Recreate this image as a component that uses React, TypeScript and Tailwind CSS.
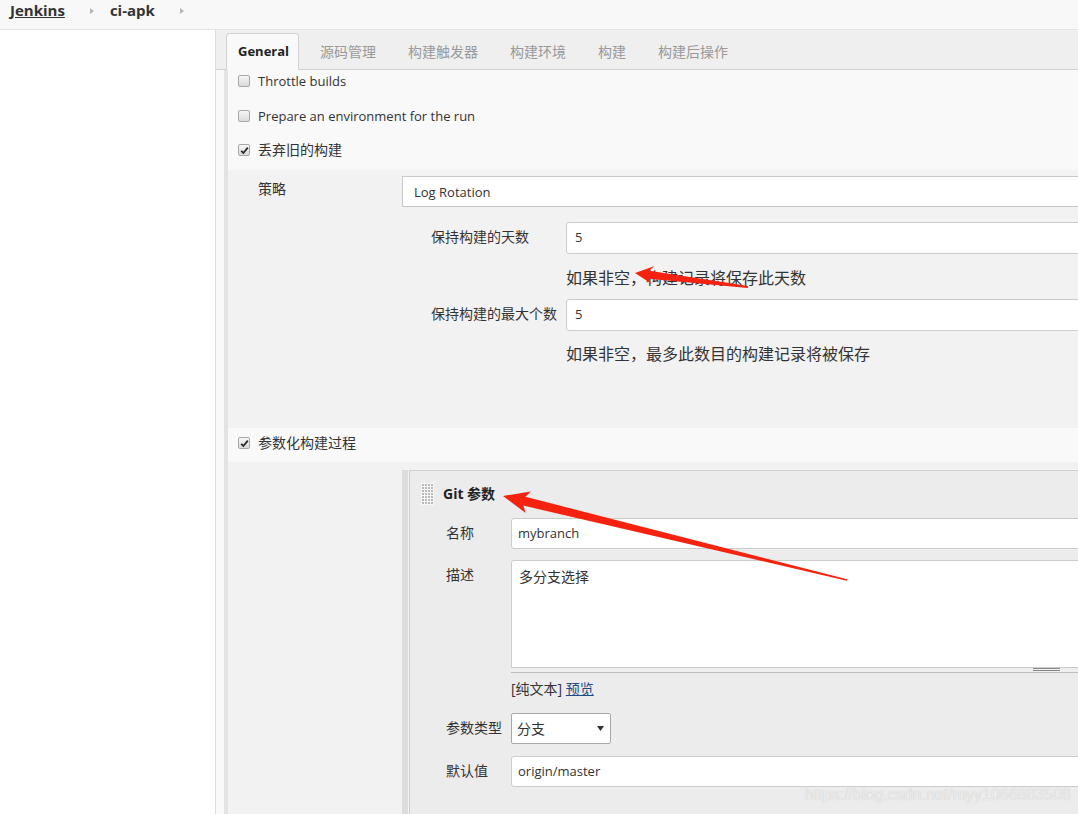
import React from "react";

function arrowPts(tx: number, ty: number, ex: number, ey: number, L: number, hw: number, sw0: number, sw1: number) {
  const dx = ex - tx, dy = ey - ty;
  const len = Math.hypot(dx, dy);
  const ux = dx / len, uy = dy / len;
  const nx = -uy, ny = ux;
  const bx = tx + ux * L, by = ty + uy * L;
  const cx = tx + ux * (L - 4), cy = ty + uy * (L - 4);
  const p = [
    [tx, ty],
    [bx + nx * hw, by + ny * hw],
    [cx + nx * sw0, cy + ny * sw0],
    [ex + nx * sw1, ey + ny * sw1],
    [ex - nx * sw1, ey - ny * sw1],
    [cx - nx * sw0, cy - ny * sw0],
    [bx - nx * hw, by - ny * hw],
  ];
  return p.map((q) => q.map((v) => v.toFixed(1)).join(",")).join(" ");
}

function Cb({ checked }: { checked?: boolean }) {
  return (
    <span className="w-[12px] h-[12px] shrink-0 rounded-[2px] border border-[#a8a8a8] bg-linear-to-b from-[#f6f6f6] to-[#dadada] flex items-center justify-center">
      {checked && (
        <svg width="9" height="9" viewBox="0 0 9 9">
          <path d="M1.2 4.8 L3.4 7 L7.8 1.6" fill="none" stroke="#2b2b2b" strokeWidth="1.8" />
        </svg>
      )}
    </span>
  );
}

function Tri({ cls }: { cls: string }) {
  return (
    <svg width="6" height="8" viewBox="0 0 6 8" className={cls}>
      <path d="M1 1 L5 4 L1 7 Z" fill="#b5b5b5" />
    </svg>
  );
}

function Handle() {
  const dots = [];
  for (let r = 0; r < 7; r++) {
    for (let c = 0; c < 4; c++) {
      dots.push(<rect key={r + "-" + c} x={1 + c * 3} y={1 + r * 3} width="2" height="2" fill="#b9b9b9" />);
    }
  }
  return (
    <svg width="13" height="22" viewBox="0 0 13 22" className="bg-[#f7f7f7]">
      {dots}
    </svg>
  );
}

export default function App() {
  const f = "font-['Open_Sans','Noto_Sans_CJK_SC',sans-serif]";
  return (
    <div className={`relative w-[1078px] h-[814px] overflow-hidden bg-white text-[#333] ${f}`}>
      {/* header */}
      <div className="h-[30px] bg-[#f8f8f8] border-b border-[#e4e4e4] flex items-start pt-[1px] pl-[10px] w-[1100px]">
        <span className="text-[15px] font-bold underline leading-[18px] text-[#333]">Jenkins</span>
        <Tri cls="ml-[24px] mt-[6px]" />
        <span className="ml-[15px] text-[15px] font-bold leading-[18px] text-[#333]">ci-apk</span>
        <Tri cls="ml-[24px] mt-[6px]" />
      </div>

      <div className="flex w-[1100px] h-[784px]">
        <aside className="w-[216px] shrink-0 bg-white border-r border-[#dcdcdc]" />
        <main className="flex-1 bg-[#f9f9f9] flex flex-col">
          {/* tabs */}
          <div className="h-[40px] bg-[#efefef] border-b border-[#d2d2d2] flex items-end pl-[10px] gap-[10px] text-[14px]">
            <div className="h-[37px] -mb-px pl-[11px] pr-[9px] flex items-center rounded-t-[4px] border border-b-0 border-[#d2d2d2] bg-[#f9f9f9] font-bold text-[13px] text-[#222]">
              General
            </div>
            <div className="h-[36px] px-[11px] flex items-center text-[#999]">源码管理</div>
            <div className="h-[36px] px-[11px] flex items-center text-[#999]">构建触发器</div>
            <div className="h-[36px] px-[11px] flex items-center text-[#999]">构建环境</div>
            <div className="h-[36px] px-[11px] flex items-center text-[#999]">构建</div>
            <div className="h-[36px] px-[11px] flex items-center text-[#999]">构建后操作</div>
          </div>

          <div className="flex-1 pl-[8px] flex">
            <div className="flex-1 border-l-4 border-[#e3e3e3] flex flex-col">
              {/* row 1 */}
              <div className="h-[34px] pt-[2px] pl-[10px]">
                <div className="h-[18px] flex items-center gap-[8px]">
                  <Cb />
                  <span className="text-[13px] leading-[18px]">Throttle builds</span>
                </div>
              </div>
              <div className="h-[35px] pt-[3px] pl-[10px]">
                <div className="h-[18px] flex items-center gap-[8px]">
                  <Cb />
                  <span className="text-[13px] leading-[18px]">Prepare an environment for the run</span>
                </div>
              </div>
              <div className="h-[31px] pt-[2px] pl-[10px]">
                <div className="h-[18px] flex items-center gap-[8px]">
                  <Cb checked />
                  <span className="text-[14px] leading-[18px]">丢弃旧的构建</span>
                </div>
              </div>

              {/* nested block 1 */}
              <div className="h-[258px] bg-[#f2f2f2] pt-[6px] flex flex-col">
                <div className="flex">
                  <div className="w-[174px] shrink-0 pl-[30px] pt-[4px] text-[14px] leading-[18px]">策略</div>
                  <div className="flex-1 h-[31px] border border-[#c8c8c8] bg-white pl-[11px] pt-[2px] flex items-center text-[13px]">
                    Log Rotation
                  </div>
                </div>
                <div className="flex mt-[15px]">
                  <div className="w-[338px] shrink-0 pl-[203px] pt-[6px] text-[14px] leading-[18px]">保持构建的天数</div>
                  <div className="flex-1 h-[32px] rounded-[3px] border border-[#cccccc] bg-white pl-[8px] flex items-center text-[13px]">
                    5
                  </div>
                </div>
                <div className="pl-[338px] mt-[13px] text-[16px] leading-[22px]">如果非空，构建记录将保存此天数</div>
                <div className="flex mt-[10px]">
                  <div className="w-[338px] shrink-0 pl-[203px] pt-[6px] text-[14px] leading-[18px]">保持构建的最大个数</div>
                  <div className="flex-1 h-[32px] rounded-[3px] border border-[#cccccc] bg-white pl-[8px] flex items-center text-[13px]">
                    5
                  </div>
                </div>
                <div className="pl-[338px] mt-[12px] text-[16px] leading-[22px]">如果非空，最多此数目的构建记录将被保存</div>
              </div>

              {/* row param */}
              <div className="h-[34px] pt-[6px] pl-[10px]">
                <div className="h-[18px] flex items-center gap-[8px]">
                  <Cb checked />
                  <span className="text-[14px] leading-[18px]">参数化构建过程</span>
                </div>
              </div>

              {/* nested block 2 */}
              <div className="flex-1 bg-[#f2f2f2] pt-[8px] flex">
                <div className="w-[174px] shrink-0" />
                <div className="w-[6px] shrink-0 bg-[#dcdcdc] mr-[1px]" />
                <div className="flex-1 bg-[#ececec] border-l border-t border-[#d0d0d0] flex flex-col">
                  <div className="flex items-center pl-[11px] mt-[12px] h-[22px]">
                    <Handle />
                    <span className="ml-[9px] text-[14px] font-bold leading-[18px] text-[#222]">Git 参数</span>
                  </div>
                  <div className="flex mt-[13px]">
                    <div className="w-[101px] shrink-0 pl-[36px] pt-[6px] text-[14px] leading-[18px]">名称</div>
                    <div className="flex-1 h-[31px] rounded-[3px] border border-[#cccccc] bg-white pl-[6px] flex items-center text-[13px]">
                      mybranch
                    </div>
                  </div>
                  <div className="flex mt-[11px]">
                    <div className="w-[101px] shrink-0 pl-[36px] pt-[6px] text-[14px] leading-[18px]">描述</div>
                    <div className="flex-1 flex flex-col">
                      <div className="h-[108px] rounded-t-[3px] border border-[#cccccc] bg-white pl-[7px] pt-[6px] text-[14px] leading-[20px]">
                        多分支选择
                      </div>
                      <div className="h-[5px] bg-[#eeeeee] border-b border-[#bdbdbd] relative">
                        <div className="absolute left-[522px] top-[0px] w-[27px] h-[3px] border-t border-b border-[#8a8a8a]" />
                      </div>
                    </div>
                  </div>
                  <div className="pl-[101px] mt-[6px] text-[14px] leading-[20px]">
                    [纯文本] <span className="underline text-[#204a87]">预览</span>
                  </div>
                  <div className="flex mt-[14px]">
                    <div className="w-[101px] shrink-0 pl-[36px] pt-[6px] text-[14px] leading-[18px]">参数类型</div>
                    <div className="w-[100px] h-[31px] rounded-[2px] border border-[#a9a9a9] bg-white pl-[5px] pr-[6px] flex items-center justify-between text-[14px]">
                      <span>分支</span>
                      <svg width="7" height="5" viewBox="0 0 7 5">
                        <path d="M0 0 L7 0 L3.5 5 Z" fill="#333" />
                      </svg>
                    </div>
                  </div>
                  <div className="flex mt-[12px]">
                    <div className="w-[101px] shrink-0 pl-[36px] pt-[6px] text-[14px] leading-[18px]">默认值</div>
                    <div className="flex-1 h-[31px] rounded-[3px] border border-[#cccccc] bg-white pl-[6px] flex items-center text-[13px]">
                      origin/master
                    </div>
                  </div>
                </div>
              </div>
            </div>
          </div>
        </main>
      </div>

      {/* watermark */}
      <div className="absolute left-[805px] top-[785px] text-[16px] leading-[20px] font-['Liberation_Sans',sans-serif] text-[#ebebeb] [text-shadow:0_0_1px_#c4c4c4]">
        https://blog.csdn.net/myy1066883508
      </div>

      {/* annotation arrows */}
      <svg className="absolute left-0 top-0 pointer-events-none" width="1078" height="814" viewBox="0 0 1078 814">
        <polygon points={arrowPts(635, 273, 748, 287, 18, 9, 4, 1)} fill="#f5220f" />
        <polygon points={arrowPts(503, 496, 847, 580, 26, 11, 4.5, 0.8)} fill="#f5220f" />
      </svg>
    </div>
  );
}
